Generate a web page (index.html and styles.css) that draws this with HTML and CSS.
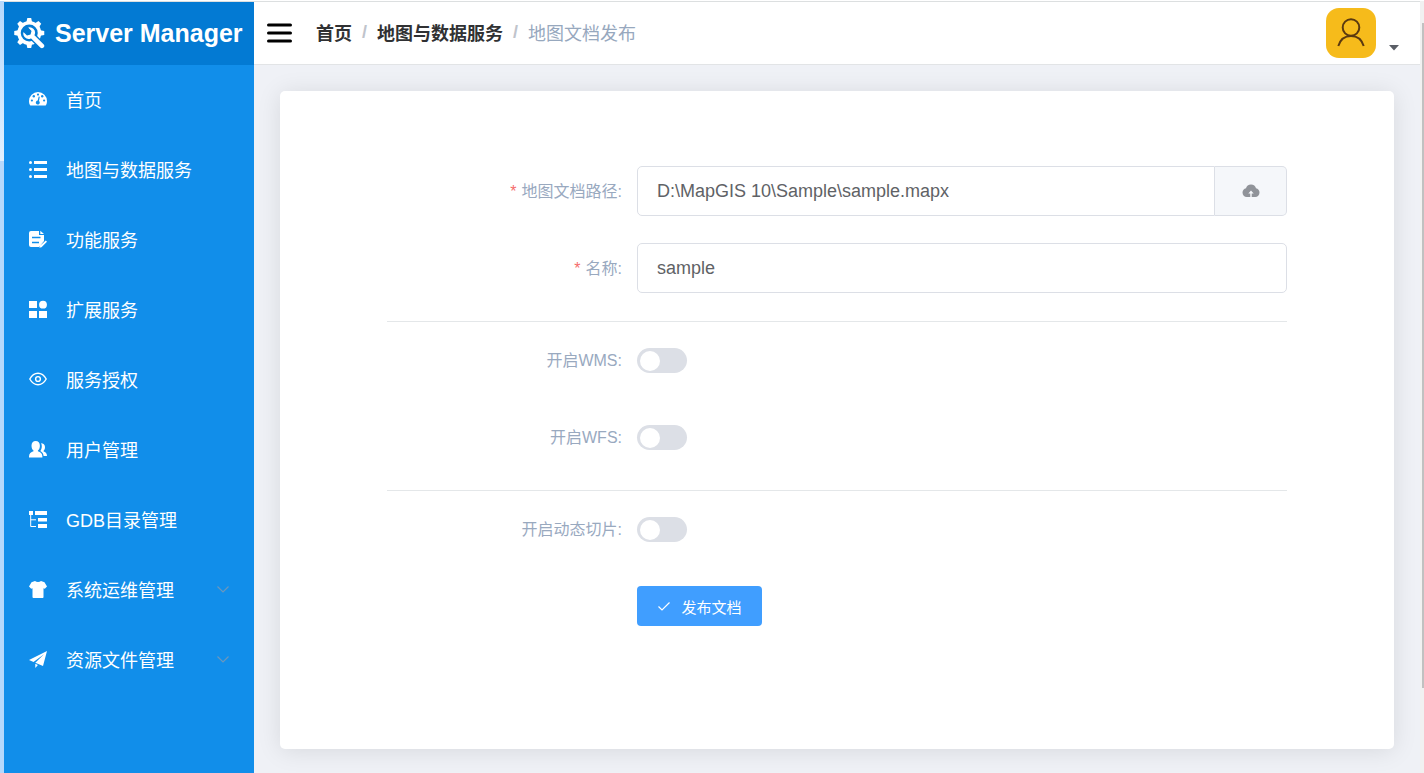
FILE: index.html
```html
<!DOCTYPE html>
<html lang="zh-CN">
<head>
<meta charset="utf-8">
<title>Server Manager</title>
<link rel="stylesheet" href="styles.css">
</head>
<body>
<div class="app">
  <div class="edge"></div>
  <aside class="sidebar">
    <a class="brand" href="#">
      <svg class="brand-logo" viewBox="0 0 31 31" aria-hidden="true">
        <g fill="#fff">
          <path id="teeth" d="M12.500 4l.8-4h3.900l.8 4v22l-.8 4h-3.900l-.8-4z"/>
          <use href="#teeth" transform="rotate(45 15.250 15)"/>
          <use href="#teeth" transform="rotate(90 15.250 15)"/>
          <use href="#teeth" transform="rotate(135 15.250 15)"/>
          <circle cx="15.250" cy="15" r="12"/>
        </g>
        <circle cx="15.250" cy="15" r="8.500" fill="#037ad3"/>
        <path d="M13 9.300a6 6 0 0 1 8.200 7.700l8.800 8.800a2.800 2.800 0 0 1-4.200 4.200L17 21.200A6 6 0 0 1 9.300 13l3.900 3.700 2.800-.7.800-2.900z" fill="#fff" stroke="#037ad3" stroke-width="1.300"/>
      </svg>
      <span>Server Manager</span>
    </a>
    <nav class="menu">
      <a class="menu-item" href="#"><svg class="icon" viewBox="0 0 18 18" aria-hidden="true"><path fill="currentColor" d="M9 2a9 9 0 0 0-9 9c0 1.500.3 3 1 4q.2.500.8.500h14.400q.6 0 .8-.5c.7-1 1-2.500 1-4A9 9 0 0 0 9 2z"/><g fill="#118eea"><circle cx="2.900" cy="10.500" r="1.100"/><circle cx="4.800" cy="6.300" r="1.200"/><circle cx="9" cy="4.600" r="1.100"/><circle cx="13.200" cy="6.300" r="1.200"/><circle cx="15.100" cy="10.500" r="1.100"/><path d="M9.700 6.500l1.100.3-.8 4.200a2 2 0 1 1-1.300-.4z"/></g></svg><span>首页</span></a>
      <a class="menu-item" href="#"><svg class="icon" viewBox="0 0 18 18" aria-hidden="true"><path fill="currentColor" d="M5 1h13v3H5zM5 8h13v3H5zM5 15h13v3H5z"/><g fill="currentColor"><circle cx="1.500" cy="2.500" r="1.500"/><circle cx="1.500" cy="9.500" r="1.500"/><circle cx="1.500" cy="16.500" r="1.500"/></g></svg><span>地图与数据服务</span></a>
      <a class="menu-item" href="#"><svg class="icon" viewBox="0 0 18 18" aria-hidden="true"><path fill="currentColor" d="M2 1h8v4h5v6l-5 6H2a2 2 0 0 1-2-2V3a2 2 0 0 1 2-2zM11.300 0.800L15 4h-3.700zM16.800 10.500l1.200 1.200-5.500 5.500-2.200.5.700-2z"/><path d="M3 7.500h8.500M3 12.500h7" stroke="#118eea" stroke-width="1.300"/></svg><span>功能服务</span></a>
      <a class="menu-item" href="#"><svg class="icon" viewBox="0 0 18 18" aria-hidden="true"><path fill="currentColor" d="M0 1h8v7H0zM0 11h8v7H0zM10 11h8v7h-8z"/><circle cx="14" cy="4.700" r="3.900" fill="currentColor"/></svg><span>扩展服务</span></a>
      <a class="menu-item" href="#"><svg class="icon" viewBox="0 0 18 18" aria-hidden="true"><g fill="none" stroke="currentColor" stroke-width="1.400"><path d="M.8 9C5 1.300 13 1.300 17.200 9 13 16.700 5 16.700.8 9z"/><circle cx="9" cy="9" r="2.400"/></g></svg><span>服务授权</span></a>
      <a class="menu-item" href="#"><svg class="icon" viewBox="0 0 18 18" aria-hidden="true"><path fill="currentColor" d="M6.700 1c2.600 0 4.200 1.900 4.200 4.700 0 2.200-.8 3.900-2 4.800v.8c2.500.8 4.500 2.300 4.500 5.200v1H0v-1c0-2.900 2-4.400 4.500-5.200v-.8c-1.200-.9-2-2.600-2-4.800C2.500 2.900 4.100 1 6.700 1zM12 3.300c2.400 0 4 1.500 4 3.800 0 1.600-.5 2.900-1.400 3.700v.7c2 .6 3.400 2 3.400 4.500h-3.400c-.2-2.300-1.300-4-3.300-5 1-1.200 1.500-3 1.500-5 0-1-.3-2-.8-2.700z"/></svg><span>用户管理</span></a>
      <a class="menu-item" href="#"><svg class="icon" viewBox="0 0 18 18" aria-hidden="true"><path fill="currentColor" d="M0 1h4v4H0zM6 1h12v4H6zM9 8h9v3.500H9zM9 14h9v4H9z"/><path d="M1.700 5v11.500H7M1.700 9.800H7" fill="none" stroke="currentColor"/></svg><span>GDB目录管理</span></a>
      <a class="menu-item" href="#"><svg class="icon" viewBox="0 0 18 18" aria-hidden="true"><path fill="currentColor" d="M6 1c1.500 1.300 4.500 1.300 6 0l3.500 1.300L18 6.500l-2.200 2.300-1.300-.6V17c0 .6-.4 1-1 1h-9a1 1 0 0 1-1-1V8.200l-1.300.6L0 6.500l2.500-4.200z"/></svg><span>系统运维管理</span><svg class="arrow" viewBox="0 0 12 12" aria-hidden="true"><path d="M.5 3.500L6 9l5.500-5.500" fill="none" stroke="currentColor" stroke-width="1.200"/></svg></a>
      <a class="menu-item" href="#"><svg class="icon" viewBox="0 0 18 18" aria-hidden="true"><path fill="currentColor" d="M18 1L0 10l4.500 2L15 4.200 6.300 12.800 14 16zM6.300 13.800V18l2.600-3z"/></svg><span>资源文件管理</span><svg class="arrow" viewBox="0 0 12 12" aria-hidden="true"><path d="M.5 3.500L6 9l5.500-5.500" fill="none" stroke="currentColor" stroke-width="1.200"/></svg></a>
    </nav>
  </aside>
  <div class="page">
    <header class="topbar">
      <button class="toggle" type="button" aria-label="菜单"><svg viewBox="0 0 25 20" aria-hidden="true"><path d="M1.500 2h22M1.500 10h22M1.500 18h22" stroke="#000" stroke-width="3" stroke-linecap="round"/></svg></button>
      <nav class="crumbs">
        <a href="#">首页</a><span class="sep">/</span><a href="#">地图与数据服务</a><span class="sep">/</span><span class="current">地图文档发布</span>
      </nav>
      <button class="user" type="button" aria-label="用户">
        <svg class="avatar" viewBox="0 0 50 50" aria-hidden="true"><g fill="none" stroke="#5b3a10" stroke-width="2"><circle cx="25" cy="19.500" r="8.300"/><path d="M12.300 38c2-6.500 7-10 12.700-10s10.700 3.500 12.700 10"/></g></svg>
        <svg class="caret" viewBox="0 0 10 6" aria-hidden="true"><path d="M0 0h10L5 5.500z" fill="#5a5e66"/></svg>
      </button>
    </header>
    <main class="content">
      <section class="card">
        <form class="form">
          <div class="row">
            <label class="label required" for="path">地图文档路径:</label>
            <div class="group">
              <input class="input" id="path" type="text" value="D:\MapGIS 10\Sample\sample.mapx">
              <button class="upload" type="button" aria-label="上传"><svg viewBox="0 0 18 14" aria-hidden="true"><path fill="#909399" d="M9 .5c2.600 0 4.500 1.700 5 3.800 2 .4 3.500 2 3.500 4.200 0 2.500-1.800 4.500-4.300 4.500H9.700V9.500h2L9 6.500l-2.700 3h2V13H4.800C2.300 13 .5 11 .5 8.500c0-2.200 1.500-3.800 3.500-4.200C4.500 2.200 6.400.5 9 .5z"/></svg></button>
            </div>
          </div>
          <div class="row">
            <label class="label required" for="name">名称:</label>
            <input class="input" id="name" type="text" value="sample">
          </div>
          <hr class="divider">
          <div class="row">
            <label class="label" for="wms">开启WMS:</label>
            <input class="switch" id="wms" type="checkbox" role="switch">
          </div>
          <div class="row">
            <label class="label" for="wfs">开启WFS:</label>
            <input class="switch" id="wfs" type="checkbox" role="switch">
          </div>
          <hr class="divider">
          <div class="row">
            <label class="label" for="tile">开启动态切片:</label>
            <input class="switch" id="tile" type="checkbox" role="switch">
          </div>
          <div class="row">
            <button class="submit" type="button"><svg viewBox="0 0 14 14" aria-hidden="true"><path d="M1.500 7.500L5 11l7.500-7.500" fill="none" stroke="#fff" stroke-width="1.200"/></svg>发布文档</button>
          </div>
        </form>
      </section>
    </main>
  </div>
  <div class="scroll"><div class="thumb"></div></div>
</div>
</body>
</html>
```
FILE: styles.css
```css
* {
  box-sizing: border-box;
}

body {
  margin: 0;
  font-family: "Liberation Sans", "Noto Sans CJK SC", sans-serif;
  font-size: 16px;
  background: #fff;
}

a {
  color: inherit;
  text-decoration: none;
}

button,
input {
  font: inherit;
  margin: 0;
}

button {
  padding: 0;
  border: 0;
  background: none;
  cursor: pointer;
}

.app {
  display: grid;
  grid-template-columns: 4px 250px 1fr 4px;
  min-height: 100vh;
  padding-top: 1px;
}

.edge {
  background: linear-gradient(#b5d8fc 0, #e2f0ff 160px, #b5d8fc 160px, #b5d8fc 100%);
}

.sidebar {
  border-top: 1px solid #dcdfe0;
  background: #118eea;
  color: #fff;
}

.brand {
  display: flex;
  align-items: center;
  gap: 10px;
  height: 63px;
  padding-left: 10px;
  background: #037ad3;
  font-size: 25px;
  font-weight: 700;
  white-space: nowrap;
}

.brand-logo {
  width: 31px;
  height: 31px;
}

.menu-item {
  display: flex;
  align-items: center;
  height: 70px;
  padding: 0 25px 2px;
  font-size: 18px;
}

.icon {
  width: 18px;
  height: 18px;
  margin-right: 19px;
}

.arrow {
  width: 12px;
  height: 12px;
  margin-left: auto;
  color: #6b97bd;
}

.page {
  display: flex;
  flex-direction: column;
  min-width: 0;
  border-top: 1px solid #dcdfe0;
  background: #eff1f6;
}

.topbar {
  display: flex;
  align-items: center;
  height: 63px;
  padding: 0 21px 0 13px;
  border-bottom: 1px solid #e2e4e6;
  background: #fff;
}

.toggle {
  display: flex;
}

.toggle svg {
  width: 25px;
  height: 20px;
}

.crumbs {
  display: flex;
  align-items: center;
  margin-left: 24px;
  padding-bottom: 2px;
  color: #303133;
  font-size: 18px;
  font-weight: 700;
}

.sep {
  width: 25px;
  color: #c0c4cc;
  text-align: center;
}

.current {
  color: #97a8be;
  font-weight: 400;
}

.user {
  display: flex;
  align-items: flex-end;
  gap: 13px;
  margin-left: auto;
}

.avatar {
  width: 50px;
  height: 50px;
  border-radius: 13px;
  background: #f6bb1b;
}

.caret {
  width: 10px;
  height: 6px;
  margin-bottom: 7px;
}

.content {
  display: flex;
  flex: 1;
  padding: 26px 26px 24px;
}

.card {
  flex: 1;
  padding: 75px 24px;
  border-radius: 5px;
  background: #fff;
  box-shadow: 0 2px 25px rgba(0, 0, 0, 0.1);
}

.form {
  display: flex;
  flex-direction: column;
  gap: 27px;
  max-width: 900px;
  margin: 0 auto;
}

.row {
  display: flex;
  align-items: center;
  height: 50px;
}

.label {
  flex: none;
  width: 250px;
  padding: 0 15px 2px 0;
  color: #99a9bf;
  text-align: right;
}

.required::before {
  content: "*";
  margin-right: 5px;
  color: #f56c6c;
}

.input {
  flex: 1;
  min-width: 0;
  height: 50px;
  padding: 0 19px;
  border: 1px solid #dcdfe6;
  border-radius: 5px;
  background: #fff;
  color: #606266;
  font-size: 18px;
}

.group {
  display: flex;
  flex: 1;
}

.group .input {
  border-radius: 5px 0 0 5px;
}

.upload {
  display: flex;
  align-items: center;
  justify-content: center;
  width: 72px;
  height: 50px;
  border: 1px solid #dcdfe6;
  border-left: 0;
  border-radius: 0 5px 5px 0;
  background: #f5f7fa;
}

.upload svg {
  width: 18px;
  height: 14px;
}

.divider {
  width: 100%;
  height: 1px;
  margin: 1px 0 -14px;
  border: 0;
  background: #e4e7e9;
}

.switch {
  appearance: none;
  width: 50px;
  height: 25px;
  padding: 3px;
  border-radius: 13px;
  background: #dcdfe6;
  cursor: pointer;
}

.switch::before {
  content: "";
  display: block;
  width: 20px;
  height: 20px;
  border-radius: 50%;
  background: #fff;
}

.switch:checked {
  background: #409eff;
}

.switch:checked::before {
  margin-left: auto;
}

.submit {
  display: flex;
  align-items: center;
  justify-content: center;
  gap: 10px;
  width: 125px;
  height: 40px;
  margin-left: 250px;
  border-radius: 4px;
  background: #409eff;
  color: #fff;
  font-size: 15px;
}

.submit svg {
  width: 14px;
  height: 14px;
}

.scroll {
  padding: 22px 0 0 2px;
  background: #f1f1f1;
}

.thumb {
  height: 86vh;
  background: #c1c1c1;
}
```
